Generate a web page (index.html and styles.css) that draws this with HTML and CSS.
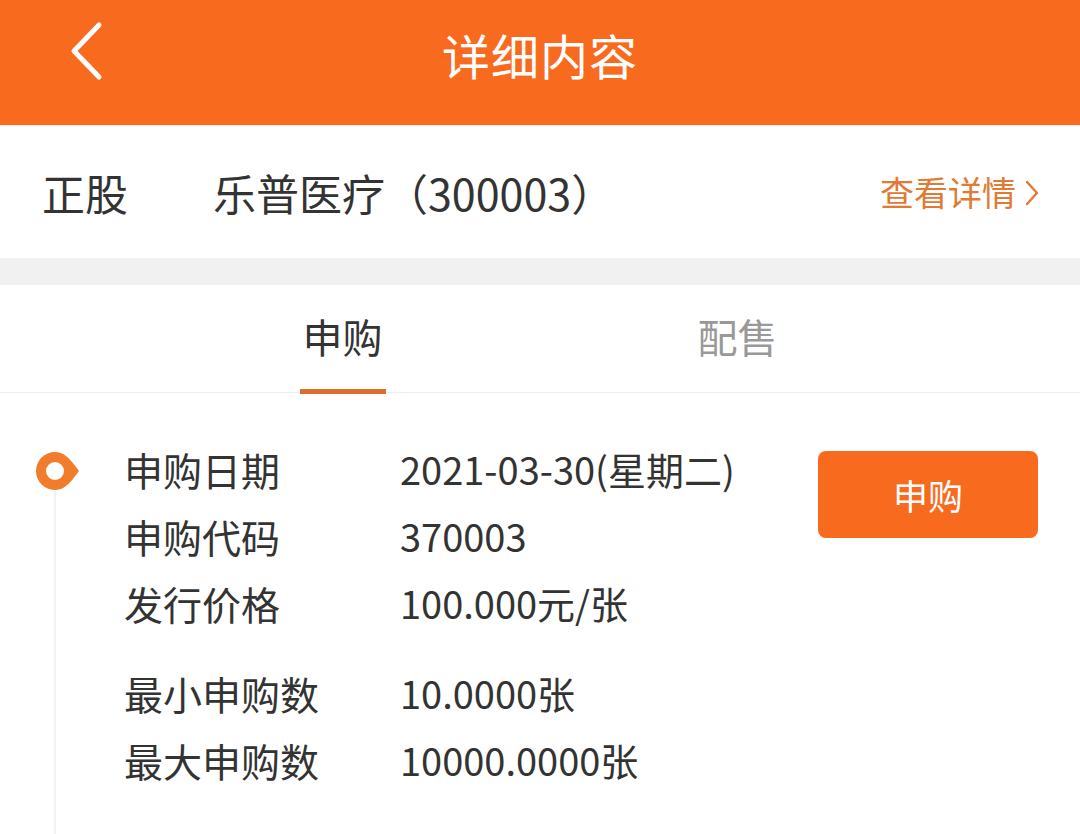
FILE: index.html
```html
<!DOCTYPE html>
<html lang="zh-CN">
<head>
<meta charset="utf-8">
<link rel="stylesheet" href="styles.css">
</head>
<body>
<div class="page">
  <header class="topbar">
    <svg class="back" viewBox="0 0 40 60" width="40" height="60"><path d="M33 4 L8 30 L33 56" fill="none" stroke="#fff" stroke-width="5" stroke-linecap="round" stroke-linejoin="round"/></svg>
    <h1 class="title">详细内容</h1>
  </header>
  <section class="stock">
    <span class="stock-tag">正股</span>
    <span class="stock-name">乐普医疗（300003）</span>
    <span class="stock-link">查看详情<svg class="chev" viewBox="0 0 16 28" width="16" height="28"><path d="M3 3 L13 14 L3 25" fill="none" stroke="#e07a34" stroke-width="2.4" stroke-linecap="round" stroke-linejoin="round"/></svg></span>
  </section>
  <div class="band"></div>
  <nav class="tabs">
    <div class="tab active"><span>申购</span></div>
    <div class="tab"><span>配售</span></div>
  </nav>
  <section class="detail">
    <div class="rail">
      <svg class="marker" viewBox="0 0 46 40" width="46" height="40"><path d="M20 1 A19 19 0 1 0 20 39 C28 39 34 34 44 20 C34 6 28 1 20 1 Z" fill="#f07c2c"/><circle cx="20" cy="20" r="9" fill="#fff"/></svg>
      <div class="line"></div>
    </div>
    <div class="rows">
      <div class="row"><span class="label">申购日期</span><span class="value">2021-03-30(星期二)</span></div>
      <div class="row"><span class="label">申购代码</span><span class="value">370003</span></div>
      <div class="row"><span class="label">发行价格</span><span class="value">100.000元/张</span></div>
      <div class="row gap"><span class="label">最小申购数</span><span class="value">10.0000张</span></div>
      <div class="row"><span class="label">最大申购数</span><span class="value">10000.0000张</span></div>
    </div>
    <button class="buy">申购</button>
  </section>
</div>
</body>
</html>
```
FILE: styles.css
```css
* { box-sizing: border-box; margin: 0; padding: 0; }
html, body { width: 1080px; height: 834px; overflow: hidden; background: #fff; }
body { font-family: "Noto Sans CJK SC", "Noto Sans", sans-serif; color: #333; }
.page { width: 1080px; height: 834px; display: flex; flex-direction: column; }

.topbar {
  height: 125px; background: #f86b1f; display: flex; align-items: center; justify-content: center;
  position: relative; box-shadow: 0 1px 2px rgba(0,0,0,0.08);
}
.back { position: absolute; left: 66px; top: 21px; }
.title { color: #fff; font-size: 48px; font-weight: 400; letter-spacing: 1px; margin-top: -17px; }

.stock { height: 133px; display: flex; align-items: center; padding: 0 40px 0 42px; font-size: 43px; }
.stock-tag { width: 171px; }
.stock-name { flex: 1; }
.stock-link { color: #e07a34; font-size: 34px; display: flex; align-items: center; gap: 8px; }
.chev { margin-top: 2px; }

.band { height: 27px; background: #f1f1f1; }

.tabs { height: 108px; display: flex; border-bottom: 1px solid #f0ebe7; padding: 0 145px; }
.tab { flex: 1; display: flex; justify-content: center; align-items: center; font-size: 40px; color: #999; }
.tab span { position: relative; height: 100%; display: flex; align-items: center; padding-bottom: 5px; }
.tab.active { color: #333; }
.tab.active span::after {
  content: ""; position: absolute; left: -3px; right: -3px; bottom: -2px; height: 5px; background: #dc6d2c;
}

.detail { flex: 1; display: flex; padding-left: 35px; }
.rail { width: 46px; display: flex; flex-direction: column; align-items: flex-start; padding-top: 58px; }
.marker { display: block; }
.line { width: 2px; flex: 1; background: #f2f2f2; margin-left: 19px; }
.rows { margin-left: 43px; padding-top: 42px; }
.row { display: flex; height: 67px; align-items: center; font-size: 39px; }
.row.gap { margin-top: 23px; }
.label { width: 276px; }
.value { font-size: 38px; }
.buy {
  margin-left: auto; margin-right: 42px; margin-top: 58px; width: 220px; height: 87px; border: none;
  border-radius: 8px; background: #f86b1f; color: #fff; font-family: inherit; font-size: 35px;
}
```
